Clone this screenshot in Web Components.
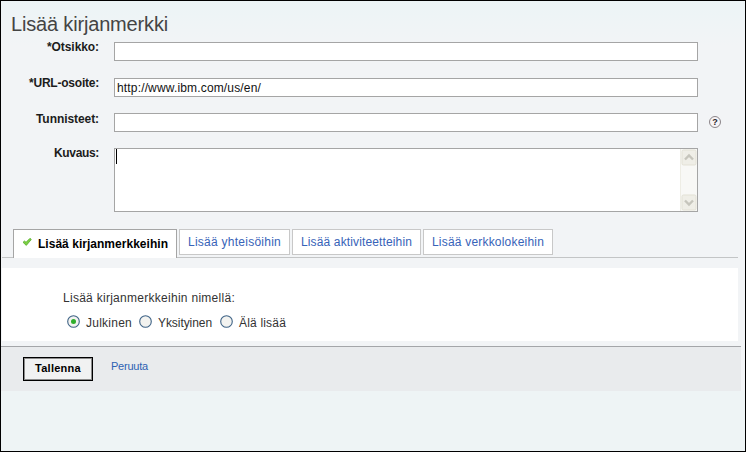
<!DOCTYPE html>
<html lang="fi"><head><meta charset="utf-8"><title>Lisää kirjanmerkki</title>
<style>html,body{margin:0;height:100%;overflow:hidden}body{font:12px/14px "Liberation Sans",Arial,sans-serif;color:#1c1c1c}</style></head>
<body>
<bookmark-page>
 <page-title><fit-text w="157">Lisää kirjanmerkki</fit-text></page-title>
 <form-row style="height:36px;--label-top:-1px" label="*Otsikko:" w="52"><text-field></text-field></form-row>
 <form-row style="height:35px;--label-top:-1px" label="*URL-osoite:" w="70"><text-field><fit-text w="144">http://www.ibm.com/us/en/</fit-text></text-field></form-row>
 <form-row style="height:35px" label="Tunnisteet:" w="63"><text-field></text-field><help-icon></help-icon></form-row>
 <form-row style="height:81px;--label-top:-1px" label="Kuvaus:" w="45"><text-area></text-area></form-row>
 <tab-bar>
  <tab-item active w="130">Lisää kirjanmerkkeihin</tab-item>
  <tab-item w="93" style="width:111px">Lisää yhteisöihin</tab-item>
  <tab-item w="111" style="width:129px">Lisää aktiviteetteihin</tab-item>
  <tab-item w="112" style="width:130px">Lisää verkkolokeihin</tab-item>
 </tab-bar>
 <option-panel>
  <fit-text slot="title" w="172">Lisää kirjanmerkkeihin nimellä:</fit-text>
  <radio-option checked w="46" style="width:72px">Julkinen</radio-option>
  <radio-option w="54" style="width:81px">Yksityinen</radio-option>
  <radio-option w="47">Älä lisää</radio-option>
 </option-panel>
 <action-bar><push-button><fit-text w="46">Tallenna</fit-text></push-button><link-action><fit-text w="37">Peruuta</fit-text></link-action></action-bar>
</bookmark-page>
<script>
// Text whose letter spacing is tuned to fill a given width.
customElements.define('fit-text',class extends HTMLElement{
 constructor(){super();this.attachShadow({mode:'open'}).innerHTML='<style>:host{display:inline-block;vertical-align:top;white-space:nowrap;text-align:left}</style><slot></slot>'}
 connectedCallback(){this.fit()}
 fit(){const w=+this.getAttribute('w'),n=this.textContent.length;if(!w||!n||!this.isConnected)return;
  this.style.width='';this.style.letterSpacing='0px';
  const s=(w-this.getBoundingClientRect().width)/n;
  this.style.letterSpacing=s+'px';this.style.width=w+'px'}
});
const define=(name,css,html,setup)=>{
 const t=document.createElement('template');
 t.innerHTML=`<style>:host{display:block;box-sizing:border-box}*{box-sizing:border-box}${css}</style>${html}`;
 customElements.define(name,class extends HTMLElement{
  constructor(){super();this.attachShadow({mode:'open'}).append(document.importNode(t.content,true))}
  connectedCallback(){if(setup)setup(this,this.shadowRoot)}
 });
};
const fill=(host,root,text)=>{const f=root.querySelector('fit-text');f.textContent=text;f.setAttribute('w',host.getAttribute('w'));f.fit()};
define('bookmark-page',`:host{width:746px;height:452px;border:1px solid #000;background:linear-gradient(#ecf4f6 0,#f2f4f6 45px,#f2f4f6 389px,#eef4f5 390px)}`,'<slot></slot>');
define('page-title',`:host{height:41px;padding:12px 0 0 10px;font-size:20px;line-height:23px;color:#444}`,'<slot></slot>');
define('form-row',`:host{display:flex;align-items:flex-start}
.l{width:98px;margin:calc(-1px + var(--label-top,0px)) 15px 0 0;font-weight:bold;text-align:right}`,
 '<div class="l"><fit-text></fit-text></div><slot></slot>',(h,r)=>fill(h,r,h.getAttribute('label')));
define('text-field',`:host{width:584px;height:19px;border:1px solid #a5a5a5;background:#fff;padding:2px 2px 0;color:#111}`,'<slot></slot>');
define('text-area',`:host{display:flex;justify-content:space-between;width:584px;height:64px;border:1px solid #a5a5a5;background:#fff}
.caret{width:1px;height:15px;margin:0 0 0 1px;background:#000}
.bar{width:17px;display:flex;flex-direction:column;justify-content:space-between;background:#f8f8f6;border-left:1px solid #eeede5}
svg{display:block}`,
`<div class="caret"></div><div class="bar">
<svg width="16" height="17"><rect x="1" y="1" width="14" height="15" rx="1.5" fill="#efeee7" stroke="#e3e1d5"/><path d="M4 10.5 8 6.5 12 10.5" fill="none" stroke="#c6c5bc" stroke-width="2.4"/></svg>
<svg width="16" height="17"><rect x="1" y="1" width="14" height="15" rx="1.5" fill="#efeee7" stroke="#e3e1d5"/><path d="M4 6.5 8 10.5 12 6.5" fill="none" stroke="#c6c5bc" stroke-width="2.4"/></svg></div>`);
define('help-icon',`:host{margin:3px 0 0 11px;width:12px;height:12px;border:1px solid #8b8589;border-radius:50%;background:#f7f4f6;color:#281b2a;font-size:9px;font-weight:bold;line-height:10px;text-align:center}`,'?');
define('tab-bar',`:host{display:flex;align-items:flex-start;gap:2px;width:736px;height:29px;margin-left:1px;padding-left:11px;background:linear-gradient(#c3c5c6,#c3c5c6) 0 28px/736px 1px no-repeat}`,'<slot></slot>');
define('tab-item',`:host{height:26px;border:1px solid #c8c8c8;background:#fff;padding:5px 0 0 8px;color:#3763b8}
:host([active]){width:164px;height:29px;border-color:#a5a5a5;border-bottom:0;padding:7px 0 0 8px;display:flex;color:#000;font-weight:bold}
svg{display:none}:host([active]) svg{display:block;margin:0 6px 0 0}`,
 `<svg width="10" height="10"><path d="M1 5.3 2.6 4 4 5.3 8 1.3 9.3 2.5 4.3 8.4Z" fill="#7dd043" stroke="#56ad2c" stroke-width=".8"/></svg><fit-text></fit-text>`,
 (h,r)=>fill(h,r,h.textContent));
define('option-panel',`:host{margin:10px 0 0 1px;width:736px;height:73px;background:#fff;padding:23px 0 0 61px;color:#333}
.r{display:flex;margin-top:10px}`,'<slot name="title"></slot><div class="r"><slot></slot></div>');
define('radio-option',`:host{display:flex;align-items:flex-start;padding-left:4px}
svg{display:block;margin:0 6px 0 0}circle.dot{display:none}:host([checked]) .dot{display:block}fit-text{margin-top:1px}`,
 `<svg width="13" height="13"><circle cx="6.5" cy="6.5" r="5.8" fill="#f3f3f0" stroke="#3f6386" stroke-width="1.1"/><circle class="dot" cx="6.5" cy="6.5" r="2.5" fill="#2fae2b"/></svg><fit-text></fit-text>`,
 (h,r)=>fill(h,r,h.textContent));
define('action-bar',`:host{display:flex;align-items:flex-start;margin-top:5px;width:740px;height:45px;border-top:1px solid #a4a6a9;background:#e9ebed;padding:10px 0 0 22px}`,'<slot></slot>');
define('push-button',`:host{width:70px;height:24px;border:1px solid #000;box-shadow:inset 1px 1px #8b8b8b,inset -1px -1px #8b8b8b;background:#f1f2f2;padding:3px 0 0 11px;font-size:11px;font-weight:bold;color:#000}`,'<slot></slot>');
define('link-action',`:host{padding:2px 0 0 18px;font-size:11px;color:#2d62b3}`,'<slot></slot>');
// Widths are measured again once every ancestor has its final font.
document.querySelectorAll('fit-text').forEach(e=>e.fit());
document.querySelectorAll('form-row,tab-item,radio-option').forEach(e=>e.shadowRoot.querySelector('fit-text').fit());
</script>
</body></html>
